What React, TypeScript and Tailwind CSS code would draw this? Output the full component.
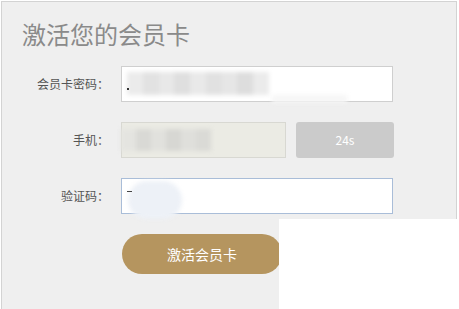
import React from "react";

const FONT = { fontFamily: '"Microsoft YaHei", "Noto Sans CJK SC", "Noto Sans", sans-serif' };

/** Blurred placeholder that stands for masked input content. */
function Smudge({ shades, className }: { shades: string[]; className: string }) {
  return (
    <div className={`flex blur-[2px] ${className}`}>
      {shades.map((c, i) => (
        <div key={i} className="flex-1 h-full" style={{ backgroundColor: c }} />
      ))}
    </div>
  );
}

export default function App() {
  return (
    <div className="relative w-[459px] h-[309px] bg-white overflow-hidden" style={FONT}>
      <div className="ml-px mt-px w-[456px] h-[308px] border-t border-l border-r border-[#d3d3d3] bg-[#efefef]">
        <h1 className="ml-[20px] mt-[20px] text-[24px] leading-[24px] text-[#8a8a8a] font-normal">激活您的会员卡</h1>

        <div className="mt-[20px] flex flex-col gap-[20px]">
          {/* 会员卡密码 */}
          <div className="flex items-center gap-[12px]">
            <label className="w-[107px] text-right text-[12px] text-[#555]">会员卡密码：</label>
            <div className="relative w-[272px] h-[36px] bg-white border border-[#cfcfcf]">
              <Smudge
                className="absolute left-[5px] top-[5px] w-[142px] h-[23px]"
                shades={["#ebebeb", "#e2e2e2", "#e8e8e8", "#dfdfdf", "#e9e9e9", "#e1e1e1", "#e6e6e6", "#dddddd", "#ebebeb"]}
              />
              <div className="absolute left-[5px] top-[21px] w-[2px] h-[2px] bg-[#333]" />
              <div className="absolute left-[150px] top-[28px] w-[75px] h-[8px] bg-[#f6f6f6] blur-[2px]" />
            </div>
          </div>

          {/* 手机 */}
          <div className="flex items-center gap-[12px]">
            <label className="w-[107px] text-right text-[12px] text-[#555]">手机：</label>
            <div className="relative w-[165px] h-[36px] bg-[#ebebe4] border border-[#d8d8d2]">
              <Smudge
                className="absolute -left-px top-[6px] w-[90px] h-[22px]"
                shades={["#e4e4e0", "#d9d9d5", "#e1e1dd", "#d7d7d3", "#dfdfdb", "#dadad6"]}
              />
            </div>
            <button className="ml-[-2px] w-[98px] h-[36px] rounded-[3px] bg-[#cbcbcb] text-white text-[12px]">24s</button>
          </div>

          {/* 验证码 */}
          <div className="flex items-center gap-[12px]">
            <label className="w-[107px] text-right text-[12px] text-[#555]">验证码：</label>
            <div className="relative w-[272px] h-[36px] bg-white border border-[#a9bdd8]">
              <div className="absolute left-[6px] top-[2px] w-[54px] h-[38px] rounded-full bg-[#edf1f7] blur-[2px]" />
              <div className="absolute left-[5px] top-[12px] w-[5px] h-px bg-[#444]" />
            </div>
          </div>

          <div className="flex">
            <button className="ml-[120px] w-[160px] h-[40px] rounded-full bg-[#b5955f] text-white text-[14px]">激活会员卡</button>
          </div>
        </div>
      </div>

      {/* white patch covering the lower right of the capture */}
      <div className="absolute left-[279px] top-[219px] right-0 bottom-0 bg-white" />
    </div>
  );
}
